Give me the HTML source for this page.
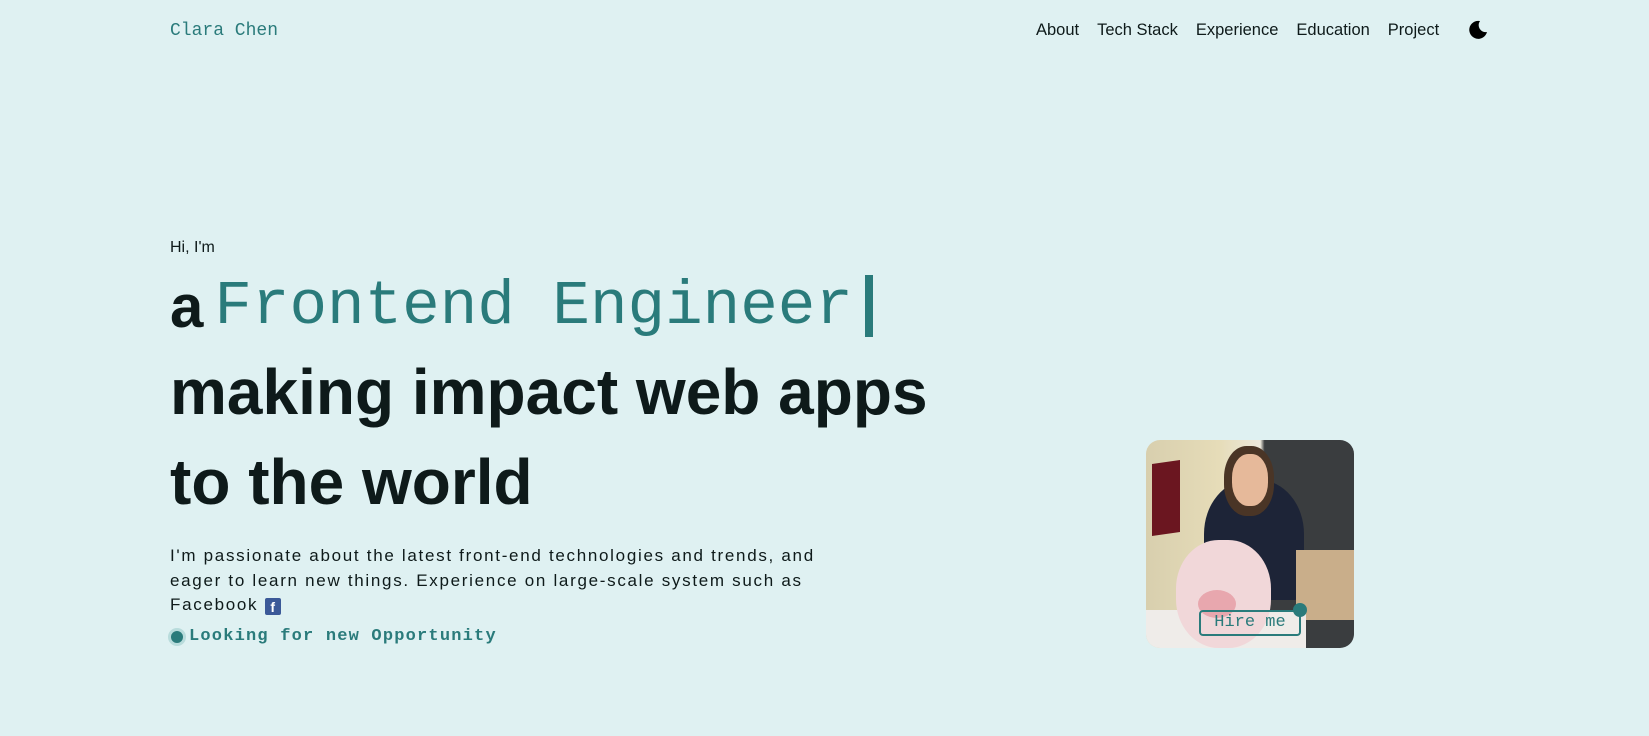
<!DOCTYPE html>
<html><head><meta charset="utf-8"><style>
*{margin:0;padding:0;box-sizing:border-box}
body{width:1649px;height:736px;background:#dff1f2;font-family:"Liberation Sans",sans-serif;color:#0e1a1a;position:relative;overflow:hidden}
.logo{position:absolute;left:170px;top:21px;font-family:"Liberation Mono",monospace;font-size:18px;color:#2a7b7b}
.nav{position:absolute;top:21px;left:1036px;font-size:16.5px;display:flex;gap:18px;white-space:nowrap}
.moon{position:absolute;left:1468px;top:20px}
.hi{position:absolute;left:170px;top:239px;font-size:16px}
.l1{position:absolute;left:170px;top:266px;height:80px;display:flex;align-items:center;white-space:nowrap}
.a{font-weight:bold;font-size:60px}
.fe{font-family:"Liberation Mono",monospace;font-size:62.6px;color:#2a7b7b;margin-left:11px}
.cur{display:inline-block;width:8px;height:62px;background:#2a7b7b;margin-left:12px}
.big{position:absolute;left:170px;font-weight:bold;font-size:64px;white-space:nowrap;letter-spacing:0px}
.p{position:absolute;left:170px;top:544px;width:662px;font-size:17px;line-height:24.5px;letter-spacing:1.7px}
.fb{display:inline-block;width:16px;height:17px;background:#3b5998;color:#fff;font-weight:bold;font-size:14px;text-align:center;line-height:19px;border-radius:2px;vertical-align:-2px;letter-spacing:0}
.look{position:absolute;left:168px;top:627px;display:flex;align-items:center;font-family:"Liberation Mono",monospace;font-weight:bold;font-size:17px;color:#2a7b7b;letter-spacing:1.2px}
.dot{width:18px;height:18px;border-radius:50%;background:#b9dcdc;display:flex;align-items:center;justify-content:center;margin-right:3px}
.dot i{width:12px;height:12px;border-radius:50%;background:#2a7b7b}
.photo{position:absolute;left:1146px;top:440px;width:208px;height:208px;border-radius:14px;overflow:hidden;background:linear-gradient(90deg,#d8cfae 0%,#e6dcb8 35%,#ece8dc 55%,#3a3d3f 57%,#3a3d3f 100%)}
.hire{position:absolute;left:1199px;top:610px;width:102px;height:26px;border:2.5px solid #2a7b7b;border-radius:4px;font-family:"Liberation Mono",monospace;font-size:17px;color:#2a7b7b;text-align:center;line-height:21px}
.hd{position:absolute;left:1293px;top:603px;width:14px;height:14px;border-radius:50%;background:#2a7b7b}
</style></head><body>
<div class="logo">Clara Chen</div>
<div class="nav"><span>About</span><span>Tech Stack</span><span>Experience</span><span>Education</span><span>Project</span></div>
<svg class="moon" width="20" height="20" viewBox="0 0 20 20"><path d="M12 1A9 9 0 1 0 19 12A7 7 0 0 1 12 1Z" fill="#000"/></svg>
<div class="hi">Hi, I'm</div>
<div class="l1"><span class="a">a</span><span class="fe">Frontend Engineer</span><span class="cur"></span></div>
<div class="big" style="top:355px">making impact web apps</div>
<div class="big" style="top:445px">to the world</div>
<div class="p">I'm passionate about the latest front-end technologies and trends, and eager to learn new things. Experience on large-scale system such as Facebook <span class="fb">f</span></div>
<div class="look"><span class="dot"><i></i></span>Looking for new Opportunity</div>
<div class="photo">
<div style="position:absolute;left:6px;top:22px;width:28px;height:72px;background:#6b1620;transform:skewY(-8deg)"></div>
<div style="position:absolute;left:58px;top:40px;width:100px;height:120px;border-radius:45% 45% 10% 10%;background:#1d2437"></div>
<div style="position:absolute;left:78px;top:6px;width:50px;height:70px;border-radius:45%;background:#4a3526"></div>
<div style="position:absolute;left:86px;top:14px;width:36px;height:52px;border-radius:45%;background:#e6b99a"></div>
<div style="position:absolute;left:150px;top:110px;width:58px;height:70px;background:#c9ae8a"></div>
<div style="position:absolute;left:0;top:170px;width:160px;height:40px;background:#efece9"></div>
<div style="position:absolute;left:30px;top:100px;width:95px;height:108px;border-radius:45%;background:#f1d7d9"></div>
<div style="position:absolute;left:52px;top:150px;width:38px;height:28px;border-radius:50%;background:#e8a7ae"></div>
</div>
<div class="hire">Hire me</div>
<div class="hd"></div>
</body></html>
